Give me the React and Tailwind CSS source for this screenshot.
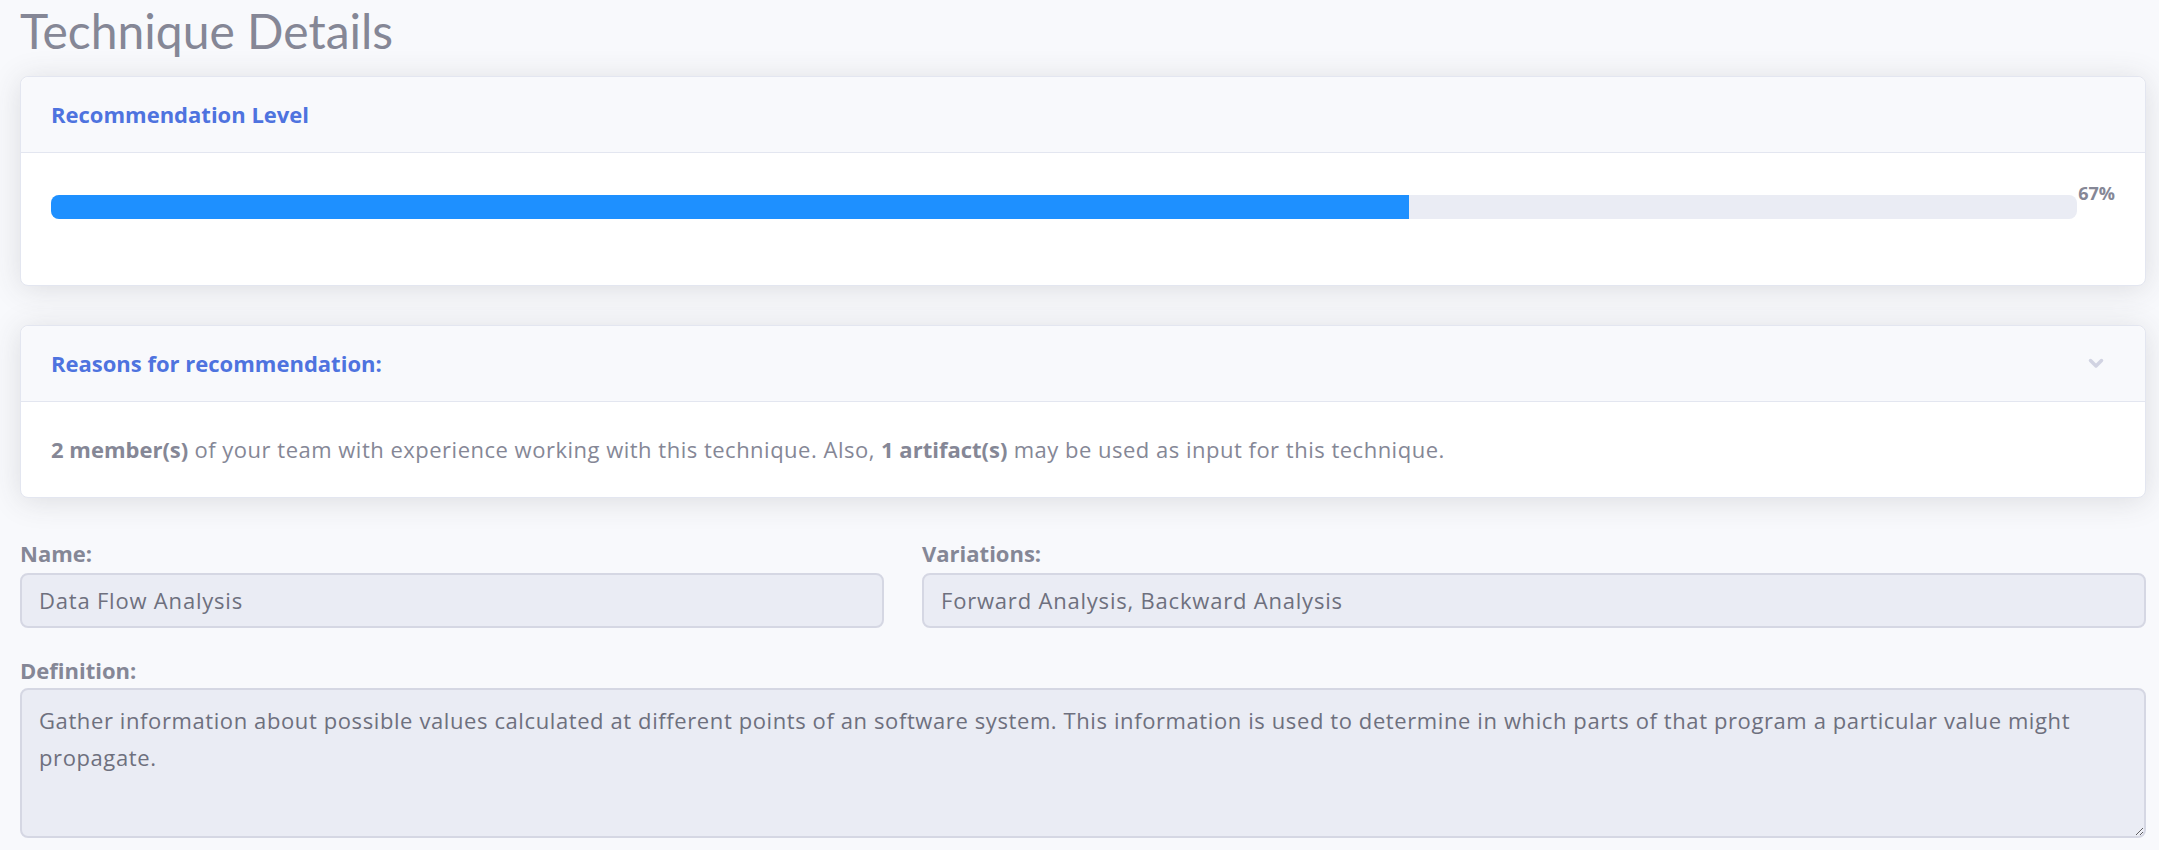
import { useState } from "react";

const definition =
  "Gather information about possible values calculated at different points of an software system. This information is used to determine in which parts of that program a particular value might propagate.";

const AngleDown = () => (
  <svg width="16" height="11" viewBox="0 0 16 11" className="mr-[11px]">
    <path
      d="M2.5 2.5 L8 8 L13.5 2.5"
      fill="none"
      stroke="#d1d3e2"
      strokeWidth="3.5"
      strokeLinecap="round"
      strokeLinejoin="round"
    />
  </svg>
);

const Card = ({ title, right, children, className = "" }) => (
  <div
    className={`rounded-[8px] border border-[#e3e6f0] bg-white shadow-[0_3px_30px_0_rgba(58,59,69,0.15)] ${className}`}
  >
    <div className="flex items-center justify-between rounded-t-[8px] border-b border-[#e3e6f0] bg-[#f8f9fc] px-[30px] py-[21px] text-[22px] font-bold leading-[33px] text-[#4e73df]">
      <span>{title}</span>
      {right}
    </div>
    {children}
  </div>
);

const fieldClass =
  "h-[55px] w-full rounded-[8px] border-2 border-[#d5d7e3] bg-[#eaecf4] px-[17px] text-[22px] tracking-[0.8px] text-[#6e707e] outline-none";

const App = () => {
  const [level] = useState(67);

  return (
    <div className="min-h-screen bg-[#f8f9fc] pl-[20px] pr-[13px] pt-[2px] pb-[20px] font-['Open_Sans',sans-serif] text-[#858796]">
      <h1 className="mb-[16px] font-['Lato',sans-serif] text-[48px] font-normal leading-[1.2]">Technique Details</h1>

      <Card title="Recommendation Level">
        <div className="flex items-start px-[30px] pt-[42px] pb-[66px]">
          <div className="h-[24px] flex-1 overflow-hidden rounded-[8px] bg-[#eaecf4]">
            <div className="h-full bg-[#1e90ff]" style={{ width: `${level}%` }} />
          </div>
          <span className="-mt-[11px] pl-[1px] text-[18px] font-bold leading-none">67%</span>
        </div>
      </Card>

      <Card title="Reasons for recommendation:" right={<AngleDown />} className="mt-[39px]">
        <p className="px-[30px] pt-[31px] pb-[31px] text-[22px] leading-[33px] tracking-[0.5px]">
          <b className="tracking-normal">2 member(s)</b> of your team with experience working with this technique. Also,{" "}
          <b className="tracking-normal">1 artifact(s)</b> may be used as input for this technique.
        </p>
      </Card>

      <div className="mt-[39px] grid grid-cols-[864px_1fr] gap-x-[38px]">
        <div>
          <label className="mb-[3px] block text-[22px] font-bold leading-[33px]">Name:</label>
          <input readOnly value="Data Flow Analysis" className={fieldClass} />
        </div>
        <div>
          <label className="mb-[3px] block text-[22px] font-bold leading-[33px]">Variations:</label>
          <input readOnly value="Forward Analysis, Backward Analysis" className={fieldClass} />
        </div>
      </div>

      <label className="mt-[26px] mb-[1px] block text-[22px] font-bold leading-[33px]">Definition:</label>
      <textarea
        readOnly
        value={definition}
        className="block h-[150px] w-full rounded-[8px] border-2 border-[#d5d7e3] bg-[#eaecf4] px-[17px] pt-[12px] text-[22px] leading-[37px] tracking-[0.6px] text-[#6e707e] outline-none"
      />
    </div>
  );
};

export default App;
